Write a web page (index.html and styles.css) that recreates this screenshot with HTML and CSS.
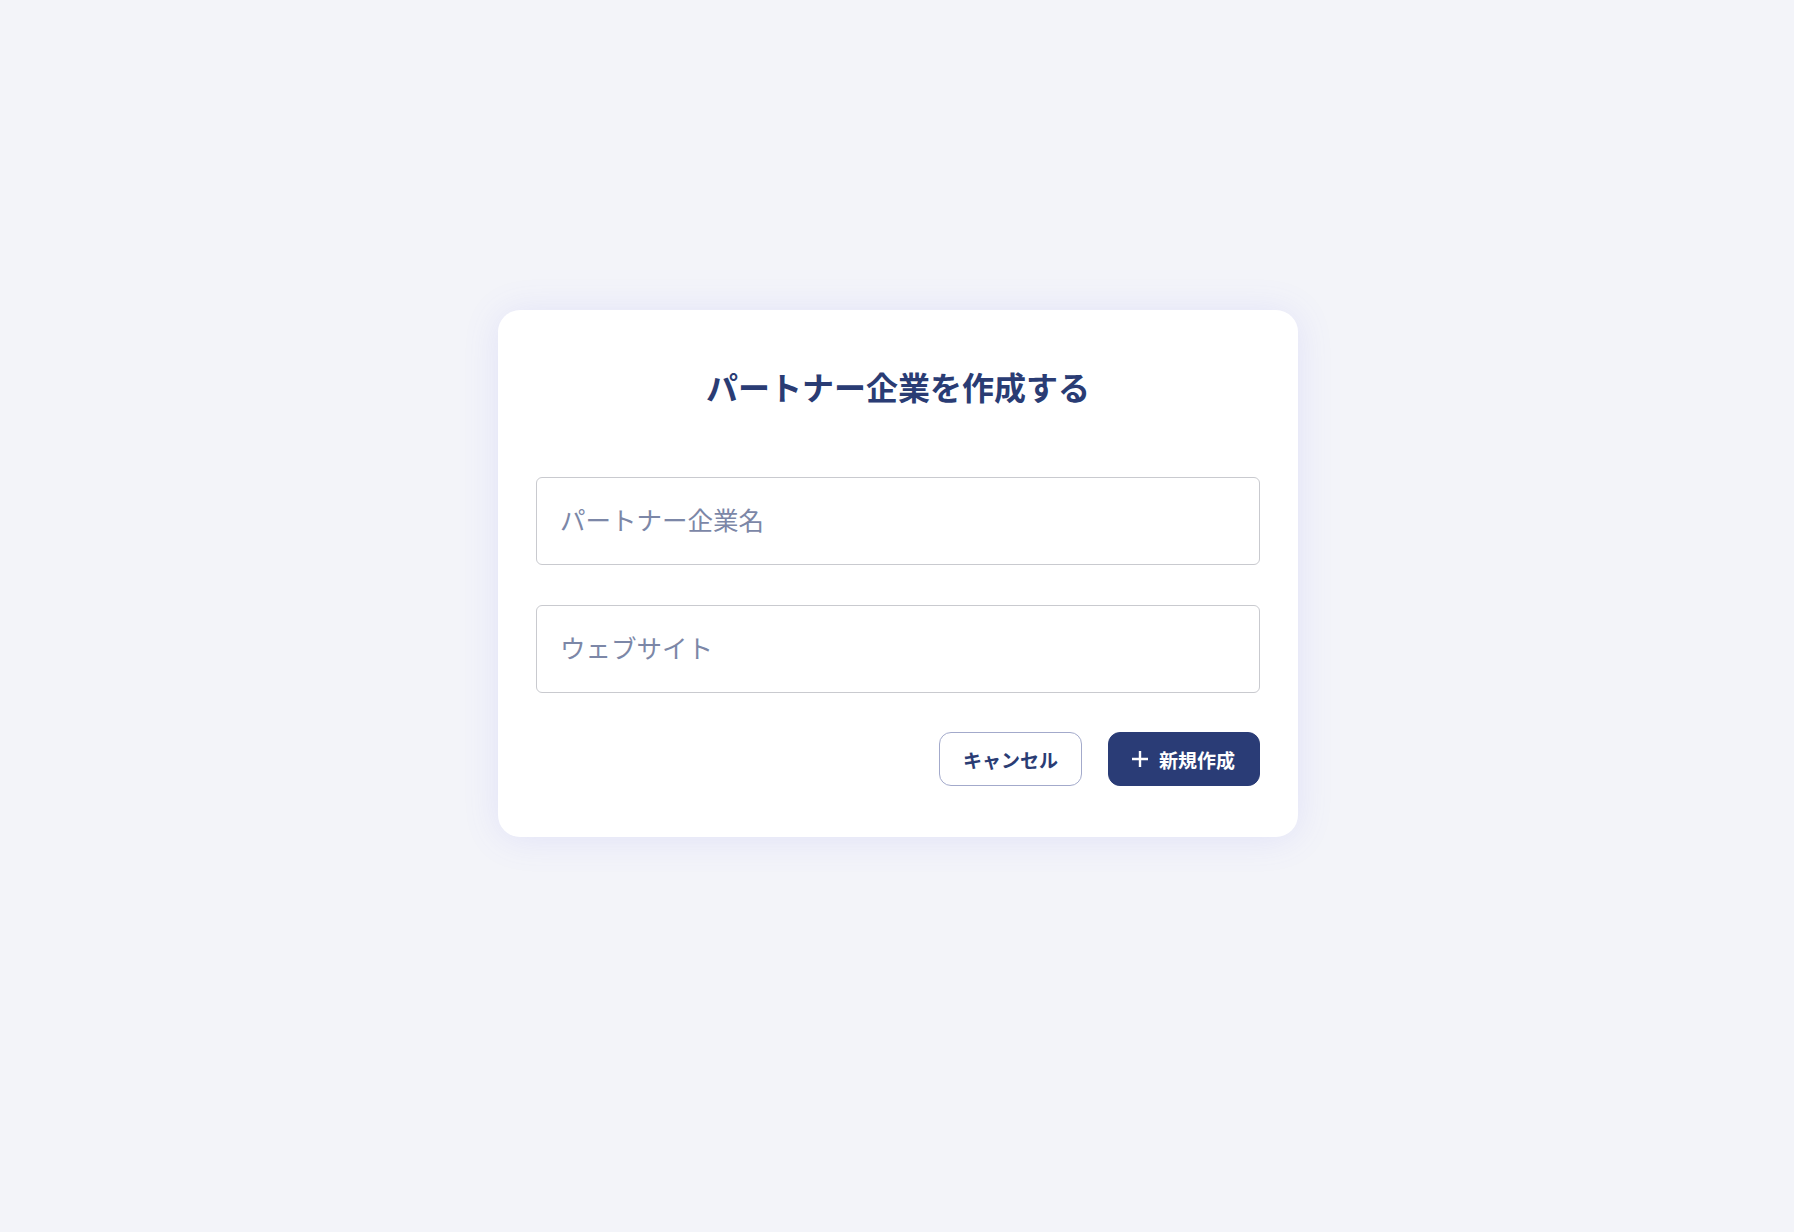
FILE: index.html
```html
<!DOCTYPE html>
<html lang="ja">
<head>
<meta charset="utf-8">
<title>パートナー企業を作成する</title>
<link rel="stylesheet" href="styles.css">
</head>
<body>
<main class="page">
  <form class="card">
    <h1 class="title">パートナー企業を作成する</h1>
    <input class="field" type="text" placeholder="パートナー企業名">
    <input class="field field-last" type="text" placeholder="ウェブサイト">
    <div class="actions">
      <button type="button" class="btn btn-outline">キャンセル</button>
      <button type="button" class="btn btn-primary">
        <svg class="plus" viewBox="0 0 18 18" width="18" height="18" aria-hidden="true"><path d="M9 1v16M1 9h16" stroke="#fff" stroke-width="2.4" fill="none"/></svg>
        <span>新規作成</span>
      </button>
    </div>
  </form>
</main>
</body>
</html>
```
FILE: styles.css
```css
html, body {
  margin: 0;
  padding: 0;
  background: #f3f4f9;
  font-family: "Noto Sans CJK JP", "Noto Sans", sans-serif;
}

.page {
  min-height: 1232px;
  box-sizing: border-box;
  padding: 310px 0 0 2px;
  display: flex;
  justify-content: center;
  align-items: flex-start;
}

.card {
  width: 800px;
  box-sizing: border-box;
  background: #ffffff;
  border-radius: 22px;
  padding: 52px 38px 51px;
  box-shadow: 0 2px 36px rgba(110, 105, 240, 0.13);
  display: flex;
  flex-direction: column;
}

.title {
  margin: 0 0 67px;
  font-size: 32px;
  line-height: 48px;
  font-weight: 700;
  color: #2a3c74;
  text-align: center;
}

.field {
  display: block;
  width: 100%;
  height: 88px;
  box-sizing: border-box;
  border: 1px solid #c9cacf;
  border-radius: 6px;
  padding: 0 23px 5px;
  margin: 0 0 40px;
  font-family: "Noto Sans CJK JP", "Noto Sans", sans-serif;
  font-size: 25.5px;
  color: #2a3c74;
  background: #fff;
  outline: none;
}

.field::placeholder {
  color: #7c87a7;
  opacity: 1;
}

.field-last {
  margin-bottom: 39px;
}

.actions {
  display: flex;
  justify-content: flex-end;
  gap: 26px;
}

.btn {
  height: 54px;
  box-sizing: border-box;
  border-radius: 12px;
  font-family: "Noto Sans CJK JP", "Noto Sans", sans-serif;
  font-size: 19px;
  font-weight: 700;
  display: flex;
  align-items: center;
  cursor: pointer;
}

.btn-outline {
  background: #fff;
  border: 1px solid #a3aacb;
  color: #2a3c74;
  padding: 0 23px;
}

.btn-primary {
  background: #2a3c76;
  border: 1px solid #2a3c76;
  color: #fff;
  padding: 0 24px 0 22px;
  gap: 10px;
}

.plus {
  display: block;
  width: 18px;
  height: 18px;
}
```
